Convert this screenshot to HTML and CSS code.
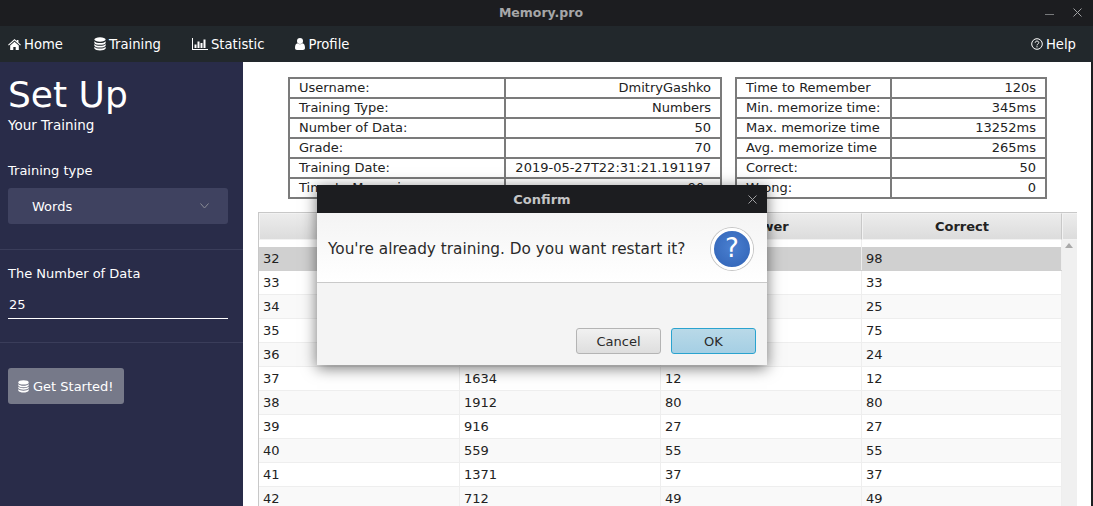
FILE: index.html
```html
<!DOCTYPE html>
<html lang="en">
<head>
    <meta charset="UTF-8">
    <title>Memory.pro</title>
    <link rel="stylesheet" href="styles.css">
</head>
<body>
    <svg class="icon-defs" width="0" height="0">
        <symbol id="i-db" viewBox="0 0 14 16">
            <ellipse cx="7" cy="2.8" rx="6.6" ry="2.6"/>
            <path d="M.4 4.7C1.5 6.3 4 6.9 7 6.9s5.5-.6 6.6-2.2v2C12.9 8.300 10 9 7 9S1.100 8.300.4 6.700z"/>
            <path d="M.4 8C1.500 9.500 4 10.100 7 10.100s5.500-.6 6.600-2.100v2c-.7 1.500-3.600 2.200-6.600 2.200S1.100 11.500.4 10z"/>
            <path d="M.4 11.200c1.100 1.500 3.600 2.100 6.600 2.100s5.500-.6 6.600-2.100v2.100c-.7 1.500-3.600 2.300-6.600 2.300s-5.900-.8-6.600-2.300z"/>
        </symbol>
    </svg>

    <div class="titlebar">
        <span class="titlebar-name">Memory.pro</span>
        <span class="win-min"></span>
        <svg class="win-close" width="9" height="9" viewBox="0 0 9 9"><path d="M.5.5l8 8M8.500.5l-8 8"/></svg>
    </div>

    <nav class="nav">
        <a class="nav-item">
            <svg class="ico" width="13" height="11" viewBox="0 0 14 12"><path d="M7 0l2.500 2.200V1h1.800v2.800L14 6.200l-.8.9L7 1.700.8 7.100 0 6.200z"/><path d="M2.300 7.200L7 3.100l4.700 4.100V12H8.300V8.600H5.700V12H2.300z"/></svg>
            Home
        </a>
        <a class="nav-item">
            <svg class="ico" width="12" height="14"><use href="#i-db"/></svg>
            Training
        </a>
        <a class="nav-item">
            <svg class="ico" width="16" height="12" viewBox="0 0 16 12"><path d="M0 0h1v11h15v1H0z"/><path d="M2.500 6.500h2V10h-2zM5.500 3.500h2V10h-2zM8.500 5h2v5h-2zM11.500 1.500h2V10h-2z"/></svg>
            Statistic
        </a>
        <a class="nav-item">
            <svg class="ico" width="10" height="12" viewBox="0 0 10 12"><circle cx="5" cy="3" r="3"/><path d="M0 10c0-3 1-4.500 2.500-4.700C3.200 5.900 4 6.200 5 6.200s1.800-.3 2.500-.9C9 5.500 10 7 10 10c0 1.300-.8 2-2 2H2c-1.200 0-2-.7-2-2z"/></svg>
            Profile
        </a>
        <a class="nav-item nav-help">
            <svg class="ico-help" width="12" height="12" viewBox="0 0 12 12"><circle cx="6" cy="6" r="5.300"/><path d="M4.200 4.700C4.300 3.600 5 3.100 6 3.100s1.800.6 1.800 1.500c0 1.300-1.800 1.300-1.800 2.800"/><path d="M6 8.200v1.200"/></svg>
            Help
        </a>
    </nav>

    <div class="content">
        <aside class="sidebar">
            <h1 class="side-title">Set Up</h1>
            <div class="side-sub">Your Training</div>

            <div class="side-label">Training type</div>
            <div class="select">
                <span>Words</span>
                <svg width="9" height="6" viewBox="0 0 9 6"><path d="M.5.500L4.500 5 8.500.500"/></svg>
            </div>
            <div class="side-sep side-sep-first"></div>

            <div class="side-label side-label-num">The Number of Data</div>
            <div class="num-input">25</div>
            <div class="side-sep side-sep-second"></div>

            <button class="start-btn">
                <svg width="11" height="13"><use href="#i-db"/></svg>
                Get Started!
            </button>
        </aside>

        <main class="main">
            <div class="info-row">
                <table class="info info-left">
                    <tr><td>Username:</td><td>DmitryGashko</td></tr>
                    <tr><td>Training Type:</td><td>Numbers</td></tr>
                    <tr><td>Number of Data:</td><td>50</td></tr>
                    <tr><td>Grade:</td><td>70</td></tr>
                    <tr><td>Training Date:</td><td>2019-05-27T22:31:21.191197</td></tr>
                    <tr><td>Time to Memorize:</td><td>90s</td></tr>
                </table>
                <table class="info info-right">
                    <tr><td>Time to Remember</td><td>120s</td></tr>
                    <tr><td>Min. memorize time:</td><td>345ms</td></tr>
                    <tr><td>Max. memorize time</td><td>13252ms</td></tr>
                    <tr><td>Avg. memorize time</td><td>265ms</td></tr>
                    <tr><td>Correct:</td><td>50</td></tr>
                    <tr><td>Wrong:</td><td>0</td></tr>
                </table>
            </div>

            <div class="grid">
                <div class="grid-head">
                    <div class="gh"></div>
                    <div class="gh"></div>
                    <div class="gh">Answer</div>
                    <div class="gh">Correct</div>
                    <div class="gh gh-corner"></div>
                </div>
                <div class="grid-wrap">
                    <div class="grid-body">
                        <div class="gr gr-cut"><span></span><span></span><span></span><span></span></div>
                        <div class="gr gr-sel"><span>32</span><span></span><span></span><span>98</span></div>
                        <div class="gr"><span>33</span><span></span><span></span><span>33</span></div>
                        <div class="gr"><span>34</span><span></span><span></span><span>25</span></div>
                        <div class="gr"><span>35</span><span></span><span></span><span>75</span></div>
                        <div class="gr"><span>36</span><span></span><span></span><span>24</span></div>
                        <div class="gr"><span>37</span><span>1634</span><span>12</span><span>12</span></div>
                        <div class="gr"><span>38</span><span>1912</span><span>80</span><span>80</span></div>
                        <div class="gr"><span>39</span><span>916</span><span>27</span><span>27</span></div>
                        <div class="gr"><span>40</span><span>559</span><span>55</span><span>55</span></div>
                        <div class="gr"><span>41</span><span>1371</span><span>37</span><span>37</span></div>
                        <div class="gr"><span>42</span><span>712</span><span>49</span><span>49</span></div>
                    </div>
                    <div class="scroll"><i class="scroll-up"></i></div>
                </div>
            </div>
        </main>
    </div>

    <div class="dialog">
        <div class="dialog-title">
            Confirm
            <svg class="dialog-close" width="9" height="9" viewBox="0 0 9 9"><path d="M.5.5l8 8M8.500.5l-8 8"/></svg>
        </div>
        <div class="dialog-msg">
            <span>You're already training. Do you want restart it?</span>
            <div class="q-icon">?</div>
        </div>
        <div class="dialog-foot">
            <button class="dlg-btn">Cancel</button>
            <button class="dlg-btn dlg-ok">OK</button>
        </div>
    </div>
</body>
</html>
```

FILE: styles.css
```css
*{
    margin: 0;
    padding: 0;
    box-sizing: border-box;
}
html, body{
    height: 506px;
    overflow: hidden;
}
body{
    position: relative;
    display: flex;
    flex-direction: column;
    font-family: "DejaVu Sans", sans-serif;
    font-size: 13px;
    background: #1d1e21;
}
.icon-defs{
    position: absolute;
}
symbol{
    fill: currentColor;
}

/* window bar */
.titlebar{
    position: relative;
    height: 26px;
    flex: none;
    background: #1c1d20;
    color: #a6a7a8;
    font-weight: bold;
    font-size: 12.500px;
    line-height: 25px;
    text-align: center;
    padding-right: 11px;
}
.win-min{
    position: absolute;
    left: 1045px;
    top: 14px;
    width: 9px;
    height: 1px;
    background: #77797b;
}
.win-close{
    position: absolute;
    left: 1073px;
    top: 8px;
}
.win-close path, .dialog-close path{
    stroke: #a0a1a3;
    stroke-width: 1;
    fill: none;
}

/* menu */
.nav{
    height: 36px;
    flex: none;
    display: flex;
    align-items: center;
    background: #22282c;
    color: #fff;
    font-size: 13.200px;
    padding-left: 8px;
    padding-right: 17px;
}
.nav-item{
    display: flex;
    align-items: center;
    gap: 3px;
    margin-right: 31px;
}
.ico{
    fill: #fff;
}
.nav-help{
    margin-left: auto;
    margin-right: 0;
}
.ico-help{
    fill: none;
    stroke: #fff;
    stroke-width: 1;
}

.content{
    flex: 1;
    display: flex;
    min-height: 0;
}

/* left panel */
.sidebar{
    width: 243px;
    flex: none;
    background: #292c49;
    color: #fff;
}
.side-title{
    font-size: 36px;
    font-weight: normal;
    line-height: 42px;
    padding: 12px 0 0 8px;
}
.side-sub{
    padding-left: 8px;
    font-size: 13.500px;
    line-height: 16px;
    margin-top: 1px;
}
.side-label{
    padding-left: 8px;
    line-height: 16px;
    margin-top: 30px;
}
.select{
    margin: 9px 15px 0 8px;
    height: 36px;
    background: #3f4260;
    border-radius: 3px;
    display: flex;
    align-items: center;
    justify-content: space-between;
    padding: 0 19px 0 24px;
}
.select path{
    fill: none;
    stroke: #8a8c95;
    stroke-width: 1;
}
.side-sep{
    height: 1px;
    background: #3a3d5a;
}
.side-sep-first{
    margin-top: 25px;
}
.side-label-num{
    margin-top: 16px;
}
.num-input{
    margin: 8px 15px 0 8px;
    height: 29px;
    line-height: 30px;
    padding-left: 1px;
    border-bottom: 1px solid #fff;
}
.side-sep-second{
    margin-top: 23px;
}
.start-btn{
    display: flex;
    align-items: center;
    gap: 4px;
    margin: 25px 0 0 8px;
    width: 116px;
    height: 36px;
    padding-left: 10px;
    border: 0;
    border-radius: 3px;
    background: #767989;
    color: #fff;
    font: inherit;
}

/* results */
.main{
    flex: 1;
    min-width: 0;
    margin-right: 2px;
    background: #fff;
    padding: 15px 14px 0 15px;
    color: #222;
}
.info-row{
    display: flex;
    gap: 13px;
    padding-left: 30px;
}
.info{
    border-collapse: collapse;
    table-layout: fixed;
    height: 121px;
}
.info td{
    border: 2px solid #7b7b7b;
    height: 20px;
    line-height: 16px;
    padding: 0 9px;
    white-space: nowrap;
    overflow: hidden;
}
.info td:last-child{
    text-align: right;
}
.info-left{
    width: 432px;
}
.info-left td{
    width: 216px;
}
.info-right{
    width: 311px;
}
.info-right td{
    width: 155px;
}

.grid{
    margin-top: 13px;
    border-left: 1px solid #c8c8c8;
    width: 819px;
}
.grid-head{
    display: grid;
    grid-template-columns: 201px 201px 201px 200px 15px;
    height: 28px;
    border: 1px solid #c8c8c8;
    border-left: 0;
}
.gh{
    background: linear-gradient(#ececec, #dcdcdc);
    border: 1px solid #f2f2f2;
    border-right: 1px solid #c8c8c8;
    font-weight: bold;
    line-height: 25px;
    text-align: center;
}
.gh-corner{
    border-right: 0;
}
.grid-wrap{
    display: flex;
    height: 270px;
    overflow: hidden;
}
.grid-body{
    flex: 1;
    min-width: 0;
}
.gr{
    display: grid;
    grid-template-columns: 201px 201px 201px 200px;
    height: 24px;
    line-height: 23px;
    border-bottom: 1px solid #eee;
}
.gr:nth-child(even){
    background: #f9f9f9;
}
.gr:nth-child(odd){
    background: #fff;
}
.gr span{
    padding-left: 4px;
    border-right: 1px solid #eee;
}
.gr.gr-cut{
    height: 7px;
    background: #fff;
    border-bottom: 0;
}
.gr.gr-sel{
    background: #d0d0d0;
    border-bottom-color: #d0d0d0;
}
.scroll{
    width: 15px;
    flex: none;
    background: #f0f0f0;
    padding: 3px 0 0 3px;
}
.scroll-up{
    display: block;
    width: 0;
    height: 0;
    border-left: 4px solid transparent;
    border-right: 4px solid transparent;
    border-bottom: 5px solid #a9a9a9;
}

/* confirm window, sits over the page */
.dialog{
    position: absolute;
    left: 317px;
    top: 185px;
    width: 450px;
    height: 180px;
    background: #f4f4f4;
    box-shadow: 0 3px 14px rgba(0,0,0,0.55);
    color: #2a2a2a;
}
.dialog-title{
    position: relative;
    height: 28px;
    background: #1c1d20;
    color: #c4c5c6;
    font-weight: bold;
    line-height: 29px;
    text-align: center;
}
.dialog-close{
    position: absolute;
    right: 10px;
    top: 10px;
}
.dialog-msg{
    height: 70px;
    display: flex;
    align-items: center;
    justify-content: space-between;
    padding: 2px 14px 0 11px;
    font-size: 15.300px;
    background: linear-gradient(#f4f4f4, #fff);
    border-bottom: 1px solid #c9c9c9;
}
.q-icon{
    width: 42px;
    height: 42px;
    border-radius: 50%;
    background: radial-gradient(circle at 50% 45%, #4a7fd0, #2f62b5);
    border: 3px solid #fff;
    box-shadow: 0 0 0 1px #c6c6c6;
    color: #fff;
    font-size: 26px;
    line-height: 35px;
    text-align: center;
}
.dialog-foot{
    display: flex;
    justify-content: flex-end;
    gap: 10px;
    padding: 45px 11px 0 0;
}
.dlg-btn{
    width: 85px;
    height: 26px;
    border: 1px solid #b4b4b4;
    border-radius: 3px;
    background: linear-gradient(#f1f1f1, #dedede);
    color: #2a2a2a;
    font: inherit;
}
.dlg-ok{
    border: 1px solid #2aa3cf;
    background: linear-gradient(#b9d9e8, #a5cfe4);
}
```
